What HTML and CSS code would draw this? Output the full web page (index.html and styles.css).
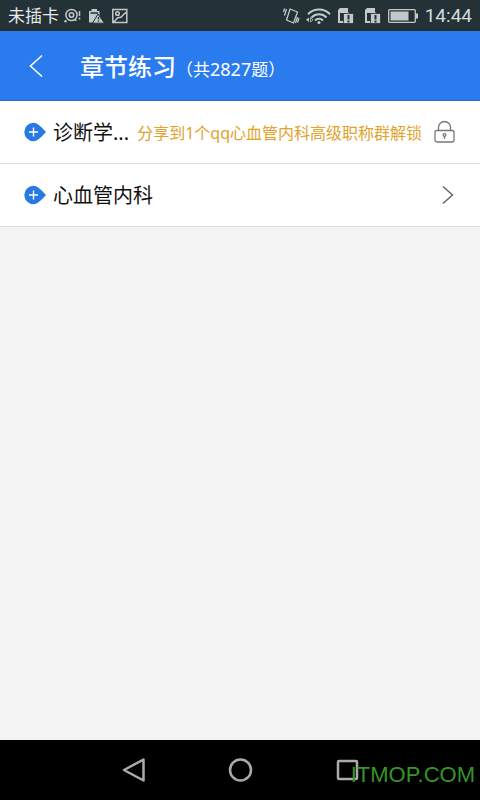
FILE: index.html
```html
<!DOCTYPE html>
<html lang="zh-CN">
<head>
<meta charset="utf-8">
<meta name="viewport" content="width=device-width, initial-scale=1">
<title>章节练习</title>
<link rel="stylesheet" href="styles.css">
</head>
<body>
<div class="status">
  <span class="carrier">未插卡</span>
  <svg class="status-left" width="66" height="18" viewBox="0 0 66 18" fill="none" stroke="#c3c9cb" stroke-width="1.5" aria-hidden="true">
    <circle cx="7.500" cy="8" r="5.600"/><circle cx="7.500" cy="8" r="2.200"/><path d="M10 12.500l2.500 1"/><circle cx="1.500" cy="14.200" r="1.200" fill="#c3c9cb" stroke="none"/><path d="M15.500 4v5M15.500 10.500v2"/>
    <path d="M25 4h2.500V2H33v2h2.500v11.500H25z" fill="#c3c9cb" stroke="none"/><path d="M26.500 6h7.500" stroke="#243136"/>
    <path d="M34 7 40.500 16.200H28.500z" fill="#c3c9cb" stroke="#243136" stroke-width="1"/><path d="M34.500 10v2.500M34.500 13.500v1.300" stroke="#243136" stroke-width="1.300"/>
    <path d="M48.800 2.500h14v13h-14zM49 15c4-1 2.500-5 6.500-4.500 4 0 3-4.500 7-5"/><circle cx="53.500" cy="6.500" r="1.800"/>
  </svg>
  <svg class="status-right" width="138" height="20" viewBox="0 0 138 20" fill="none" stroke="#c3c9cb" stroke-width="1.300" aria-hidden="true">
    <path d="M7 3 14.500 6 10.500 17 3.500 14zM3.500 3 1.500 9.500M1.500 2.500.5 6M14.500 11l-2 6M16 12l-1.500 4.500"/>
    <g stroke-width="2"><path d="M25 8.200a15.500 15.500 0 0 1 22 0M28.500 11.500a10.500 10.500 0 0 1 15 0M32 14.500a5.500 5.500 0 0 1 8 0"/></g>
    <circle cx="36" cy="16.500" r="1.500" fill="#c3c9cb" stroke="none"/><path d="M26 11.500v4.500l-3-2.200z" fill="#c3c9cb" stroke="none"/><path d="M27.500 11.500v4.500l2.500-2.200z" stroke-width=".8"/>
    <g id="sim"><path d="M57 2h8v4l2 2v9H55V4z" fill="#c3c9cb" stroke="none"/><path d="M57 7h6v8h-6z" fill="#243136" stroke="none"/><path d="M60.500 7.500h10V17.500h-10z" fill="#c3c9cb" stroke="#243136" stroke-width=".8"/><path d="M65.500 9v4.500M65.500 14.500V16.500" stroke="#243136" stroke-width="2"/></g>
    <use href="#sim" x="27"/>
    <rect x="105.700" y="3.700" width="26.600" height="12.600" rx="1"/><path d="M107.500 5.500h18v9h-18z" fill="#c3c9cb" stroke="none"/><path d="M134 7.500v5" stroke-width="2"/>
  </svg>
  <time class="clock">14:44</time>
</div>
<header class="header">
  <button class="back" type="button" aria-label="返回">
    <svg width="14" height="24" viewBox="0 0 14 24" fill="none" stroke="#fff" stroke-width="1.600"><path d="M13 1.500 1.500 12 13 22.500"/></svg>
  </button>
  <h1 class="title">章节练习<small class="count"><span class="paren" lang="zh-TW">（</span>共<span class="number">2827</span>题<span class="paren" lang="zh-TW">）</span></small></h1>
</header>
<main class="content">
  <ul class="chapters">
    <li><a class="chapter" href="#">
      <svg class="marker" width="22" height="20" viewBox="0 0 22 20" aria-hidden="true"><path d="M9.500.8C13 .8 16 3.500 22 10c-6 6.500-9 9.200-12.500 9.200a9.200 9.200 0 0 1 0-18.400z" fill="#2879e2"/><path d="M9.500 5.500v9M5 10h9" stroke="#fff" stroke-width="1.400"/></svg>
      <span class="name">诊断学...</span>
      <span class="hint">分享到1个qq心血管内科高级职称群解锁</span>
      <svg class="lock" width="22" height="24" viewBox="0 0 22 24" fill="none" stroke="#777" stroke-width="1.300" aria-hidden="true"><rect x="1" y="10.500" width="19" height="11.500" rx="2"/><path d="M4.500 10.500V7.500a6 6 0 0 1 12 0v3"/><circle cx="10.500" cy="15" r="1.400"/><path d="M10.500 16.500v2.500"/></svg>
    </a></li>
    <li><a class="chapter" href="#">
      <svg class="marker" width="22" height="20" viewBox="0 0 22 20" aria-hidden="true"><path d="M9.500.8C13 .8 16 3.500 22 10c-6 6.500-9 9.200-12.500 9.200a9.200 9.200 0 0 1 0-18.400z" fill="#2879e2"/><path d="M9.500 5.500v9M5 10h9" stroke="#fff" stroke-width="1.400"/></svg>
      <span class="name">心血管内科</span>
      <svg class="arrow" width="12" height="20" viewBox="0 0 12 20" fill="none" stroke="#666" stroke-width="1.500" aria-hidden="true"><path d="M1 1.500 10.500 10 1 18.500"/></svg>
    </a></li>
  </ul>
</main>
<nav class="nav" aria-label="系统导航">
  <button class="key" type="button" aria-label="后退"><svg width="26" height="26" viewBox="0 0 26 26"><path d="M23.500 2.500v21L4 13z"/></svg></button>
  <button class="key" type="button" aria-label="主页"><svg width="26" height="26" viewBox="0 0 26 26"><circle cx="13.500" cy="13" r="10.500"/></svg></button>
  <button class="key" type="button" aria-label="最近任务"><svg width="26" height="26" viewBox="0 0 26 26"><rect x="4" y="4" width="19" height="18" rx="1"/></svg></button>
  <span class="watermark">ITMOP.COM</span>
</nav>
</body>
</html>
```
FILE: styles.css
```css
* { box-sizing: border-box; }
body {
  margin: 0;
  min-height: 100vh;
  display: flex;
  flex-direction: column;
  background: #f3f3f3;
  color: #111;
  font-family: "Noto Sans", "Noto Sans CJK SC", sans-serif;
}
button {
  padding: 0;
  border: 0;
  background: none;
  display: flex;
  align-items: center;
  justify-content: center;
}
svg { flex: none; }

.status {
  display: flex;
  align-items: center;
  height: 31px;
  padding: 1px 8px 0;
  background: #243136;
  color: #d5dadc;
}
.carrier { font-size: 17px; line-height: 30px; color: #e6eaeb; }
.status-left { margin-left: 5px; }
.status-right { margin-left: auto; }
.clock {
  margin-left: 4px;
  font: 19px/30px Roboto, sans-serif;
}

.header {
  display: flex;
  align-items: center;
  height: 70px;
  background: #2a7bee;
  border-bottom: 1px solid #2c69c8;
  color: #fff;
}
.back { width: 72px; height: 69px; }
.title {
  margin: 0 0 0 8px;
  padding-top: 6px;
  font-size: 24px;
  line-height: 36px;
  font-weight: 500;
}
.count { font-size: 17px; font-weight: 400; }
.number { font-size: 18px; }
.paren { font-family: "Noto Sans CJK TC", sans-serif; }

.content { flex: 1; }
.chapters {
  margin: 0;
  padding: 0;
  list-style: none;
  background: #fff;
}
.chapter {
  display: flex;
  align-items: center;
  height: 63px;
  padding: 0 24px;
  border-bottom: 1px solid #e0e0e0;
  color: inherit;
  text-decoration: none;
}
.name {
  margin-left: 7px;
  padding-top: 2px;
  font-size: 20px;
  line-height: 30px;
  white-space: nowrap;
}
.hint {
  margin: 0 12px 0 auto;
  padding-top: 2px;
  font-size: 16px;
  line-height: 24px;
  white-space: nowrap;
  color: #e2a22c;
}
.arrow { margin-left: auto; margin-right: 2px; }

.nav {
  position: relative;
  display: flex;
  justify-content: center;
  gap: 81px;
  height: 60px;
  background: #000;
}
.key { width: 26px; height: 60px; }
.key svg {
  fill: none;
  stroke: #aaa;
  stroke-width: 2.5;
  stroke-linejoin: round;
}
.watermark {
  position: absolute;
  right: 5px;
  bottom: 12px;
  font: 22px/26px "Liberation Sans", Arial, sans-serif;
  color: #359526;
}
```
